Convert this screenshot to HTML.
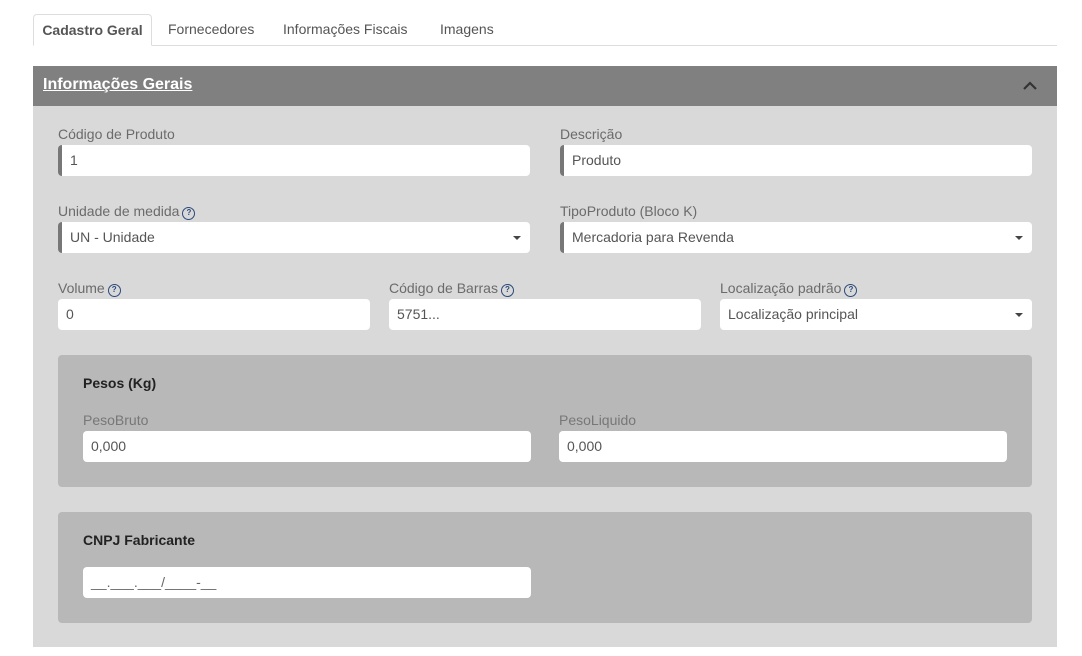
<!DOCTYPE html>
<html><head><meta charset="utf-8"><style>
*{box-sizing:border-box;margin:0;padding:0}
body{width:1082px;height:656px;background:#fff;font-family:"Liberation Sans",Arial,sans-serif;font-size:14px;position:relative;overflow:hidden}
.a{position:absolute}
.tabline{left:33px;top:45px;width:1024px;height:1px;background:#ddd}
.tab{top:14px;height:32px;line-height:31px;color:#555;font-size:14px}
.active{left:33px;width:119px;border:1px solid #ddd;border-bottom:1px solid #fff;border-radius:4px 4px 0 0;background:#fff;text-align:center;font-weight:bold;color:#555}
.hdr{left:33px;top:66px;width:1024px;height:40px;background:#808080}
.hdr span{position:absolute;left:10px;top:10px;color:#fff;font-weight:bold;font-size:16px;text-decoration:underline}
.body{left:33px;top:106px;width:1024px;height:541px;background:#d9d9d9}
.lbl{color:#6b6b6b;font-size:14px;line-height:16px}
.inp{background:#fff;border-radius:4px;height:31px;line-height:31px;padding-left:8px;color:#555;font-size:14px}
.bar{border-left:4px solid #777;padding-left:8px}
.car{position:absolute;right:9px;top:14px;width:0;height:0;border-left:4px solid transparent;border-right:4px solid transparent;border-top:4px solid #444}
.q{display:inline-block;width:13px;height:13px;border:1.5px solid #2b4a7a;border-radius:50%;font-size:8px;line-height:10px;text-align:center;color:#2b4a7a;font-weight:bold;vertical-align:1px;margin-left:3px}
.box{background:#b8b8b8;border-radius:4px}
.t{font-weight:bold;color:#222;font-size:14px}
</style></head><body>
<div class="a tabline"></div>
<div class="a tab active">Cadastro Geral</div>
<div class="a tab" style="left:168px">Fornecedores</div>
<div class="a tab" style="left:283px">Informações Fiscais</div>
<div class="a tab" style="left:440px">Imagens</div>
<div class="a hdr"><span>Informações Gerais</span>
<svg class="a" style="left:990px;top:15px" width="14" height="10"><path d="M1 8 L7 2 L13 8" stroke="#333" stroke-width="2.2" fill="none"/></svg></div>
<div class="a body"></div>

<div class="a lbl" style="left:58px;top:126px">Código de Produto</div>
<div class="a inp bar" style="left:58px;top:145px;width:472px">1</div>
<div class="a lbl" style="left:560px;top:126px">Descrição</div>
<div class="a inp bar" style="left:560px;top:145px;width:472px">Produto</div>

<div class="a lbl" style="left:58px;top:203px">Unidade de medida<span class="q">?</span></div>
<div class="a inp bar" style="left:58px;top:222px;width:472px">UN - Unidade<i class="car"></i></div>
<div class="a lbl" style="left:560px;top:203px">TipoProduto (Bloco K)</div>
<div class="a inp bar" style="left:560px;top:222px;width:472px">Mercadoria para Revenda<i class="car"></i></div>

<div class="a lbl" style="left:58px;top:280px">Volume<span class="q">?</span></div>
<div class="a inp" style="left:58px;top:299px;width:312px">0</div>
<div class="a lbl" style="left:389px;top:280px">Código de Barras<span class="q">?</span></div>
<div class="a inp" style="left:389px;top:299px;width:312px">5751...</div>
<div class="a lbl" style="left:720px;top:280px">Localização padrão<span class="q">?</span></div>
<div class="a inp" style="left:720px;top:299px;width:312px">Localização principal<i class="car"></i></div>

<div class="a box" style="left:58px;top:355px;width:974px;height:132px"></div>
<div class="a t" style="left:83px;top:375px">Pesos (Kg)</div>
<div class="a lbl" style="left:83px;top:412px;color:#777">PesoBruto</div>
<div class="a inp" style="left:83px;top:431px;width:448px">0,000</div>
<div class="a lbl" style="left:559px;top:412px;color:#777">PesoLiquido</div>
<div class="a inp" style="left:559px;top:431px;width:448px">0,000</div>

<div class="a box" style="left:58px;top:512px;width:974px;height:111px"></div>
<div class="a t" style="left:83px;top:532px">CNPJ Fabricante</div>
<div class="a inp" style="left:83px;top:567px;width:448px;color:#666">__.___.___/____-__</div>
</body></html>
